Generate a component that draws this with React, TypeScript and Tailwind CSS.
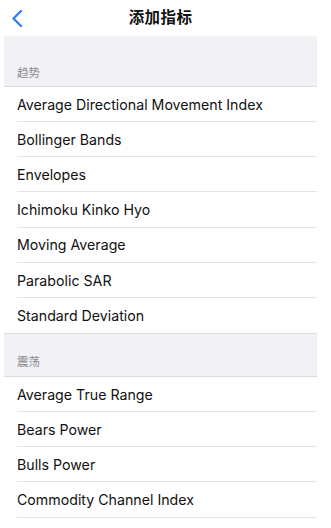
const sections = [
  {
    title: "趋势",
    height: "h-[51px]",
    items: [
      "Average Directional Movement Index",
      "Bollinger Bands",
      "Envelopes",
      "Ichimoku Kinko Hyo",
      "Moving Average",
      "Parabolic SAR",
      "Standard Deviation",
    ],
  },
  {
    title: "震荡",
    height: "h-[44px]",
    items: ["Average True Range", "Bears Power", "Bulls Power", "Commodity Channel Index"],
  },
];

export default function App() {
  return (
    <div
      className="w-[331px] h-[528px] overflow-hidden bg-white pl-[4px] pr-[14px]"
      style={{ fontFamily: 'Inter, "Noto Sans CJK SC", sans-serif' }}
    >
      {/* Nav bar */}
      <div className="relative h-[36px] flex items-center justify-center">
        <button className="absolute left-[6px] top-[9px]" aria-label="Back">
          <svg width="14" height="18" viewBox="0 0 14 18" fill="none">
            <path
              d="M11 2 L3.5 9.5 L11 17"
              stroke="#2f7cf6"
              strokeWidth="2.3"
              strokeLinecap="round"
              strokeLinejoin="round"
            />
          </svg>
        </button>
        <span className="text-[15.5px] font-bold text-[#111] tracking-wide">添加指标</span>
      </div>

      {sections.map((section, i) => (
        <div key={section.title}>
          <div
            className={`${section.height} bg-[#f1f1f6] flex items-end px-[13px] pb-[7px] border-b border-[#dcdce0] ${
              i > 0 ? "border-t" : ""
            }`}
          >
            <span className="text-[11.5px] leading-none text-[#8a8a8e]">{section.title}</span>
          </div>
          <div className="pl-[13px]">
            {section.items.map((item, j) => (
              <div
                key={item}
                className={`h-[35.15px] pt-[1px] flex items-center text-[14.2px] text-[#111] ${
                  j < section.items.length - 1 || i === sections.length - 1 ? "border-b border-[#e4e4e6]" : ""
                }`}
              >
                {item}
              </div>
            ))}
          </div>
        </div>
      ))}
    </div>
  );
}
